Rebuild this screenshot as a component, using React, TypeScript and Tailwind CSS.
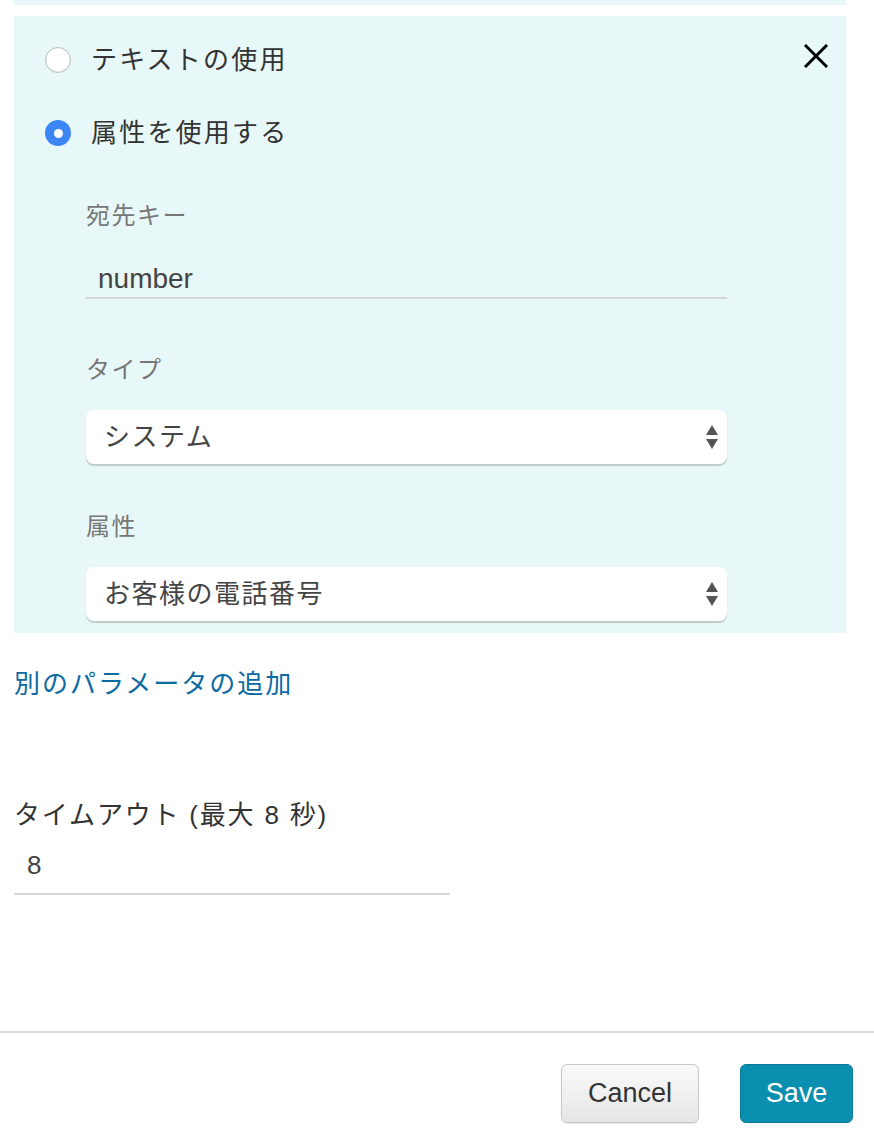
const font = { fontFamily: '"Liberation Sans", "Noto Sans CJK JP", sans-serif' };

function Radio({ checked, label }: { checked?: boolean; label: string }) {
  return (
    <label className="flex items-center h-[36px] pl-[31px]">
      {checked ? (
        <span className="w-[26px] h-[26px] rounded-full bg-[#3d86f5] flex items-center justify-center">
          <span className="w-[9px] h-[9px] rounded-full bg-white" />
        </span>
      ) : (
        <span className="w-[26px] h-[26px] rounded-full bg-white border border-[#bdbdbd] shadow-[inset_0_-1px_2px_rgba(0,0,0,0.08)]" />
      )}
      <span className="ml-[20px] text-[26px] tracking-[2.2px] leading-[36px] text-[#333]">{label}</span>
    </label>
  );
}

function SelectBox({ value }: { value: string }) {
  return (
    <div className="h-[54px] bg-white rounded-[8px] shadow-[0_2px_1px_rgba(0,0,0,0.18)] flex items-center pl-[18px] pr-[8px]">
      <span className="flex-1 text-[26px] tracking-[1.5px] text-[#444]">{value}</span>
      <svg width="14" height="26" viewBox="0 0 14 26">
        <polygon points="7,1 13,11 1,11" fill="#555" />
        <polygon points="1,15 13,15 7,25" fill="#555" />
      </svg>
    </div>
  );
}

export default function App() {
  return (
    <div className="w-[874px] h-[1142px] bg-white overflow-hidden" style={font}>
      <div className="ml-[14px] w-[832px] h-[5px] bg-[#e8f8f8]" />
      <div className="relative ml-[14px] w-[832px] mt-[11px] h-[617px] bg-[#e8f8f8] pt-[26px]">
        <button className="absolute right-[16px] top-[26px] w-[28px] h-[28px] flex items-center justify-center">
          <svg width="24" height="24" viewBox="0 0 24 24">
            <path d="M2 2 L22 22 M22 2 L2 22" stroke="#000" strokeWidth="3" strokeLinecap="square" />
          </svg>
        </button>
        <Radio label="テキストの使用" />
        <div className="mt-[37px]">
          <Radio checked label="属性を使用する" />
        </div>
        <div className="ml-[72px] w-[641px] mt-[50px]">
          <div className="text-[24px] tracking-[1.5px] leading-[30px] text-[#777]">宛先キー</div>
          <div className="pt-[33px] pb-[3px] pl-[12px] border-b-2 border-[#d6d6d6] text-[28px] leading-[30px] text-[#444]">
            number
          </div>
          <div className="mt-[56px] text-[24px] tracking-[1.5px] leading-[30px] text-[#777]">タイプ</div>
          <div className="mt-[25px]">
            <SelectBox value="システム" />
          </div>
          <div className="mt-[48px] text-[24px] tracking-[1.5px] leading-[30px] text-[#777]">属性</div>
          <div className="mt-[25px]">
            <SelectBox value="お客様の電話番号" />
          </div>
        </div>
      </div>
      <div className="mt-[33px] ml-[14px] text-[26px] tracking-[2px] leading-[36px] text-[#0b6aa2]">別のパラメータの追加</div>
      <div className="mt-[98px] ml-[14px] text-[26px] tracking-[1.8px] leading-[30px] text-[#333]">タイムアウト (最大 8 秒)</div>
      <div className="ml-[14px] w-[436px] mt-[20px] pl-[13px] pb-[13px] border-b-2 border-[#d6d6d6] text-[26px] leading-[30px] text-[#444]">
        8
      </div>
      <div className="mt-[136px] border-t-2 border-[#dddddd]" />
      <div className="flex justify-end gap-[41px] pr-[21px] mt-[31px]">
        <button className="w-[138px] h-[59px] rounded-[6px] border border-[#c8c8c8] bg-gradient-to-b from-[#fafafa] to-[#e6e6e6] shadow-[0_1px_1px_rgba(0,0,0,0.1)] text-[27px] text-[#333]">
          Cancel
        </button>
        <button className="w-[113px] h-[59px] rounded-[6px] border border-[#0a7a97] bg-[#0b8fb0] text-[27px] text-white">
          Save
        </button>
      </div>
    </div>
  );
}
